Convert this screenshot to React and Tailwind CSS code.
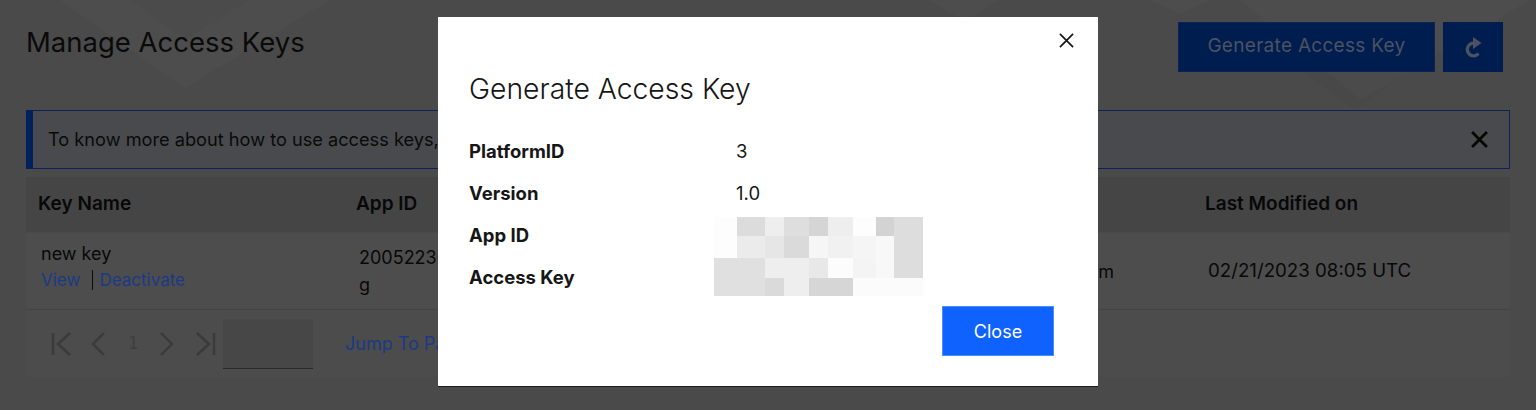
import React from "react";

const mosaic = [
  {
    h: "h-[19px]",
    cells: [
      ["w-[23px]", "bg-[#fdfdfd]"],
      ["w-[28px]", "bg-[#dcdcdc]"],
      ["w-[19px]", "bg-[#eeeeee]"],
      ["w-[25px]", "bg-[#dedede]"],
      ["w-[19px]", "bg-[#d5d5d5]"],
      ["w-[25px]", "bg-[#eeeeee]"],
      ["w-[23px]", "bg-[#fdfdfd]"],
      ["w-[18px]", "bg-[#d3d3d3]"],
      ["w-[29px]", "bg-[#dddddd]"],
    ],
  },
  {
    h: "h-[22px]",
    cells: [
      ["w-[23px]", "bg-[#fdfdfd]"],
      ["w-[28px]", "bg-[#ebebeb]"],
      ["w-[19px]", "bg-[#e6e6e6]"],
      ["w-[25px]", "bg-[#dadada]"],
      ["w-[19px]", "bg-[#f6f6f6]"],
      ["w-[25px]", "bg-[#f1f1f1]"],
      ["w-[23px]", "bg-[#f5f5f5]"],
      ["w-[18px]", "bg-[#f8f8f8]"],
      ["w-[29px]", "bg-[#dddddd]"],
    ],
  },
  {
    h: "h-[20px]",
    cells: [
      ["w-[51px]", "bg-[#e0e0e0]"],
      ["w-[44px]", "bg-[#eeeeee]"],
      ["w-[19px]", "bg-[#e8e8e8]"],
      ["w-[25px]", "bg-[#fcfcfc]"],
      ["w-[23px]", "bg-[#f4f4f4]"],
      ["w-[18px]", "bg-[#f8f8f8]"],
      ["w-[29px]", "bg-[#dddddd]"],
    ],
  },
  {
    h: "h-[18px]",
    cells: [
      ["w-[51px]", "bg-[#e0e0e0]"],
      ["w-[19px]", "bg-[#dadada]"],
      ["w-[25px]", "bg-[#eeeeee]"],
      ["w-[44px]", "bg-[#d6d6d6]"],
      ["w-[70px]", "bg-[#fbfbfb]"],
    ],
  },
];

function XIcon({ className, stroke = 2 }) {
  return (
    <svg viewBox="0 0 16 16" className={className} fill="none">
      <path d="M1 1 L15 15 M15 1 L1 15" stroke="currentColor" strokeWidth={stroke} />
    </svg>
  );
}

function Chevron({ dir = "left", bar = false }) {
  const left = dir === "left";
  return (
    <svg viewBox="0 0 24 24" className="w-[24px] h-[24px] text-[#3a3a3a]" fill="none">
      {left ? (
        <>
          {bar && <path d="M3 1 V23" stroke="currentColor" strokeWidth="2.4" />}
          <path d={bar ? "M20 1 L8 12 L20 23" : "M18 1 L7 12 L18 23"} stroke="currentColor" strokeWidth="2.4" />
        </>
      ) : (
        <>
          <path d={bar ? "M4 1 L16 12 L4 23" : "M6 1 L17 12 L6 23"} stroke="currentColor" strokeWidth="2.4" />
          {bar && <path d="M21 1 V23" stroke="currentColor" strokeWidth="2.4" />}
        </>
      )}
    </svg>
  );
}

export default function App() {
  return (
    <div className="relative w-[1536px] h-[410px] overflow-hidden bg-[#4a4a4a] font-['Inter',sans-serif] text-[#070707]">
      {/* faint decorative background chevrons */}
      <svg className="absolute inset-0 w-full h-full" viewBox="0 0 1536 410">
        <polygon points="60,0 185,88 330,0" fill="#ffffff" opacity="0.018" />
        <polygon points="130,0 185,40 250,0" fill="#000000" opacity="0.02" />
        <polygon points="930,0 1000,0 965,22" fill="#ffffff" opacity="0.02" />
        <polygon points="1150,0 1210,0 1180,14" fill="#ffffff" opacity="0.02" />
        <polygon points="1240,0 1361,100 1530,0" fill="#ffffff" opacity="0.018" />
        <polygon points="1300,70 1355,110 1410,70 1355,40" fill="#000000" opacity="0.02" />
      </svg>

      <div className="relative pl-[26px] pr-[26px]">
        {/* header */}
        <div className="flex justify-between items-start pt-[22px] pr-[7px]">
          <h1 className="mt-[2px] text-[27.5px] leading-[36px] font-normal text-[#0a0a0a]">Manage Access Keys</h1>
          <div className="flex gap-[8px]">
            <button className="h-[50px] w-[257px] pb-[2px] bg-[#001d4f] border border-[#0a2555] text-[19px] tracking-[0.3px] text-[#4b5262]">
              Generate Access Key
            </button>
            <button className="h-[50px] w-[60px] bg-[#001d4f] flex items-center justify-center">
              <svg viewBox="0 0 20 22" className="w-[20px] h-[22px]">
                <path d="M11 7.2 A6.3 6.3 0 1 0 15.5 17.5" fill="none" stroke="#4b5262" strokeWidth="3.2" />
                <polygon points="10,1 18.5,7 10,13" fill="#4b5262" />
              </svg>
            </button>
          </div>
        </div>

        {/* notification */}
        <div className="mt-[38px] h-[59px] flex items-center justify-between bg-[#484a4d] border border-[#0b2457] border-l-[7px] border-l-[#00215e]">
          <p className="ml-[15px] text-[18.2px] text-[#0a0a0a] whitespace-nowrap">
            To know more about how to use access keys,
          </p>
          <XIcon className="w-[17px] h-[17px] mr-[21px] text-[#050505]" stroke={2.6} />
        </div>

        {/* table */}
        <div className="mt-[8px]">
          <div className="flex h-[55px] items-center bg-[#454545] text-[19px] font-semibold text-[#080808]">
            <div className="w-[318px] pl-[12px]">Key Name</div>
            <div className="w-[400px] pl-[12px]">App ID</div>
            <div className="w-[449px] pl-[56px]">Created By</div>
            <div className="flex-1 pl-[12px]">Last Modified on</div>
          </div>
          <div className="flex h-[78px] items-center bg-[#4d4d4d] border-t border-[#4a4a4a] border-b border-b-[#434343] text-[18px] text-[#080808]">
            <div className="w-[318px] pl-[15px] -mt-[9px] leading-[27px]">
              <div>new key</div>
              <div className="flex items-center text-[17px]">
                <span className="text-[#1b3a85]">View</span>
                <span className="ml-[12px] mr-[6px] h-[20px] w-[1px] bg-[#0a0a0a]"></span>
                <span className="text-[#1b3a85]">Deactivate</span>
              </div>
            </div>
            <div className="w-[400px] pl-[15px] leading-[27px]">
              <div className="whitespace-nowrap">200522308</div>
              <div>g</div>
            </div>
            <div className="w-[449px] pr-[79px] text-right whitespace-nowrap">user@ibm.com</div>
            <div className="flex-1 pl-[15px] text-[18.7px]">02/21/2023 08:05 UTC</div>
          </div>
          <div className="flex h-[67px] items-center bg-[#4c4c4c]">
            <div className="flex items-center pl-[24px]">
              <Chevron dir="left" bar />
              <div className="ml-[12px]"><Chevron dir="left" /></div>
              <span className="ml-[18px] w-[10px] text-[17px] font-['DejaVu_Sans_Mono',monospace] text-[#3e3e3e]">1</span>
              <div className="ml-[17px]"><Chevron dir="right" /></div>
              <div className="ml-[14px]"><Chevron dir="right" bar /></div>
            </div>
            <div className="ml-[6px] w-[90px] h-[50px] bg-[#474747] border-b border-[#2a2a2a]"></div>
            <span className="ml-[32px] text-[18px] text-[#1b3a85]">Jump To Page</span>
          </div>
        </div>
      </div>

      {/* modal */}
      <div className="absolute left-[438px] top-[17px] w-[660px] h-[370px] bg-white border-b border-[#1c1c1c] text-[#161616]">
        <button className="absolute right-[24px] top-[16px] text-[#161616]">
          <XIcon className="w-[15px] h-[15px]" stroke={1.8} />
        </button>
        <div className="pl-[31px] pt-[54px]">
          <h2 className="text-[28.3px] leading-[36px] font-light">Generate Access Key</h2>
          <div className="mt-[24px] text-[18.5px]">
            {[
              ["PlatformID", "3"],
              ["Version", "1.0"],
              ["App ID", ""],
              ["Access Key", ""],
            ].map(([k, v]) => (
              <div key={k} className="flex h-[42px] items-center">
                <div className="w-[267px] font-bold">{k}</div>
                <div>{v}</div>
              </div>
            ))}
          </div>
        </div>
        <div className="absolute left-[276px] top-[200px] flex flex-col">
          {mosaic.map((row, i) => (
            <div key={i} className={`flex ${row.h}`}>
              {row.cells.map(([w, bg], j) => (
                <div key={j} className={`${w} ${bg}`}></div>
              ))}
            </div>
          ))}
        </div>
        <div className="flex justify-end pr-[44px] mt-[7px]">
          <button className="w-[112px] h-[50px] bg-[#0f62fe] border border-[#4d8bff] text-white text-[18px]">Close</button>
        </div>
      </div>
    </div>
  );
}
